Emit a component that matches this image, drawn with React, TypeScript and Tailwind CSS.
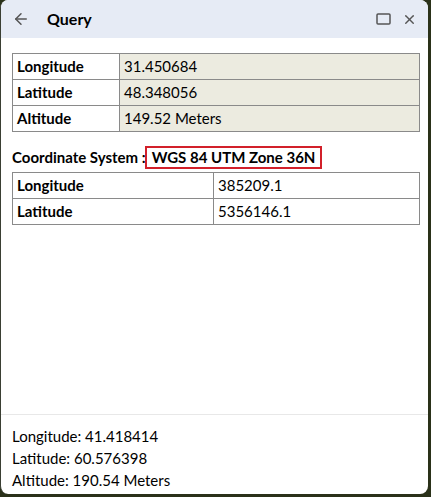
import { ArrowLeft, X } from "lucide-react";

const geoRows = [
    { label: "Longitude", value: "31.450684" },
    { label: "Latitude", value: "48.348056" },
    { label: "Altitude", value: "149.52 Meters" },
];

const utmRows = [
    { label: "Longitude", value: "385209.1" },
    { label: "Latitude", value: "5356146.1" },
];

const App = () => {
    return (
        <div className="w-[431px] h-[497px] bg-[#2a3119] font-['Lato','Liberation_Sans',sans-serif] text-[15px] text-black">
            <div className="w-[428px] h-[494px] bg-white rounded-[8px] overflow-hidden flex flex-col border-l border-[#3a3f33]">
                {/* header */}
                <div className="h-[38px] bg-[#e6ebf5] flex items-center pl-[11px] pr-[11px] shrink-0">
                    <ArrowLeft size={18} strokeWidth={2} className="text-[#555]" />
                    <span className="ml-[17px] font-bold text-[16px]">Query</span>
                    <div className="ml-auto flex items-center gap-[11px] text-[#555]">
                        <svg width="15" height="12" viewBox="0 0 15 12" fill="none" stroke="currentColor" strokeWidth="1.5">
                            <rect x="1" y="1" width="13" height="10" rx="1" />
                        </svg>
                        <X size={15} strokeWidth={2.2} />
                    </div>
                </div>

                <div className="px-[11px] pt-[15px] flex-1">
                    <table className="w-[408px] border-collapse">
                        <tbody>
                            {geoRows.map((r) => (
                                <tr key={r.label} className="h-[26px]">
                                    <td className="w-[107px] border border-[#8a8a8a] px-[4px] font-bold">{r.label}</td>
                                    <td className="border border-[#8a8a8a] px-[4px] bg-[#ecebe0]">{r.value}</td>
                                </tr>
                            ))}
                        </tbody>
                    </table>

                    <div className="mt-[14px] mb-[3px] h-[23px] flex items-center font-bold">
                        <span>Coordinate System :</span>
                        <span className="ml-[-1px] border-2 border-[#d2202a] px-[5px] h-[23px] flex items-center">WGS 84 UTM Zone 36N</span>
                    </div>

                    <table className="w-[408px] border-collapse">
                        <tbody>
                            {utmRows.map((r) => (
                                <tr key={r.label} className="h-[26px]">
                                    <td className="w-[201px] border border-[#8a8a8a] px-[4px] font-bold">{r.label}</td>
                                    <td className="border border-[#8a8a8a] px-[4px]">{r.value}</td>
                                </tr>
                            ))}
                        </tbody>
                    </table>
                </div>

                <div className="border-t border-[#e8e8e8] px-[11px] pt-[10px] pb-[3px] leading-[22px] shrink-0">
                    <div>Longitude: 41.418414</div>
                    <div>Latitude: 60.576398</div>
                    <div>Altitude: 190.54 Meters</div>
                </div>
            </div>
        </div>
    );
};

export default App;
